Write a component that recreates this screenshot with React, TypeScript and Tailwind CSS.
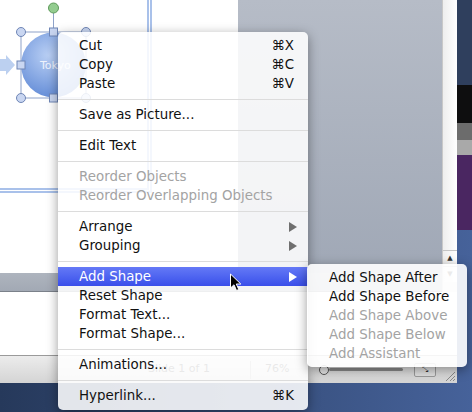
import React from 'react';

type Row =
  | { kind: 'sep' }
  | { kind: 'item'; label: string; keys?: string; off?: boolean; sub?: boolean; hot?: boolean };

const mainMenu: Row[] = [
  { kind: 'item', label: 'Cut', keys: '⌘X' },
  { kind: 'item', label: 'Copy', keys: '⌘C' },
  { kind: 'item', label: 'Paste', keys: '⌘V' },
  { kind: 'sep' },
  { kind: 'item', label: 'Save as Picture...' },
  { kind: 'sep' },
  { kind: 'item', label: 'Edit Text' },
  { kind: 'sep' },
  { kind: 'item', label: 'Reorder Objects', off: true },
  { kind: 'item', label: 'Reorder Overlapping Objects', off: true },
  { kind: 'sep' },
  { kind: 'item', label: 'Arrange', sub: true },
  { kind: 'item', label: 'Grouping', sub: true },
  { kind: 'sep' },
  { kind: 'item', label: 'Add Shape', sub: true, hot: true },
  { kind: 'item', label: 'Reset Shape' },
  { kind: 'item', label: 'Format Text...' },
  { kind: 'item', label: 'Format Shape...' },
  { kind: 'sep' },
  { kind: 'item', label: 'Animations...' },
  { kind: 'sep' },
  { kind: 'item', label: 'Hyperlink...', keys: '⌘K' },
];

const subMenu: Row[] = [
  { kind: 'item', label: 'Add Shape After' },
  { kind: 'item', label: 'Add Shape Before' },
  { kind: 'item', label: 'Add Shape Above', off: true },
  { kind: 'item', label: 'Add Shape Below', off: true },
  { kind: 'item', label: 'Add Assistant', off: true },
];

function Arrow({ white }: { white?: boolean }) {
  return (
    <svg width="8" height="10" viewBox="0 0 8 10" className="-mr-[3px] -mt-[2px]">
      <polygon points="0,0 8,5 0,10" fill={white ? '#ffffff' : '#6f6f6f'} />
    </svg>
  );
}

function MenuRows({ rows, indent }: { rows: Row[]; indent: string }) {
  return (
    <>
      {rows.map((r, i) =>
        r.kind === 'sep' ? (
          <div key={i} className="h-[12px] flex items-center">
            <div className="h-px w-full bg-[#dcdcdc]" />
          </div>
        ) : (
          <div
            key={i}
            className={
              'h-[19px] pt-[2px] flex items-center justify-between pr-[14px] ' +
              indent +
              (r.hot
                ? ' bg-gradient-to-b from-[#6579f6] to-[#3a4eea] text-white'
                : r.off
                ? ' text-[#a3a3a3]'
                : ' text-[#111111]')
            }
          >
            <span>{r.label}</span>
            {r.keys && <span>{r.keys}</span>}
            {r.sub && <Arrow white={r.hot} />}
          </div>
        )
      )}
    </>
  );
}

function Shape() {
  return (
    <svg width="120" height="110" viewBox="0 0 120 110" className="absolute left-0 top-0">
      <defs>
        <radialGradient id="ball" cx="42%" cy="35%" r="70%">
          <stop offset="0%" stopColor="#b9cff4" />
          <stop offset="100%" stopColor="#5f89d6" />
        </radialGradient>
      </defs>
      <polygon points="0,59 6,59 6,55 15,65 6,75 6,71 0,71" fill="#bcd0f0" />
      <circle cx="53.5" cy="65" r="32.5" fill="url(#ball)" />
      <text x="40" y="69" fill="#eef3fc" fontSize="11" fontFamily="DejaVu Sans, sans-serif">
        Tokyo
      </text>
      <rect x="21" y="32" width="65" height="66" fill="none" stroke="#8ea2c9" strokeWidth="1" />
      <line x1="53.5" y1="13" x2="53.5" y2="32" stroke="#8ea2c9" />
      <circle cx="53.5" cy="8" r="5" fill="#93cc8f" stroke="#5e9a5a" />
      {[
        [21, 32],
        [86, 32],
        [21, 98],
        [86, 98],
      ].map(([x, y], i) => (
        <circle key={i} cx={x} cy={y} r="4.5" fill="#c9d6f1" stroke="#6f86b6" />
      ))}
      {[
        [53.5, 32],
        [21, 65],
        [86, 65],
        [53.5, 98],
      ].map(([x, y], i) => (
        <rect key={i} x={x - 4} y={y - 4} width="8" height="8" fill="#c9d6f1" stroke="#6f86b6" />
      ))}
    </svg>
  );
}

export default function App() {
  return (
    <div className="relative w-[472px] h-[412px] overflow-hidden bg-gradient-to-r from-[#26395b] to-[#46629a] font-['DejaVu_Sans',sans-serif]">
      {/* window behind the menu */}
      <div className="flex h-[383px]">
        <div className="w-[457px] flex flex-col">
          <div className="flex h-[292px]">
            <div className="w-[442px] flex flex-col">
              <div className="flex h-[273px]">
                <div className="w-[238px] bg-white relative">
                  <div className="w-[152px] h-[193px] border-r-[5px] border-b-[5px] border-double border-[#a9c1ea]" />
                  <Shape />
                </div>
                <div className="flex-1 bg-gradient-to-b from-[#b6bcc7] to-[#a0a8b6]" />
              </div>
              <div className="h-[19px] bg-gradient-to-b from-[#aeb4be] to-[#a2a9b4] border-b border-[#7b818a]" />
            </div>
            <div className="w-[15px] flex flex-col bg-gradient-to-r from-[#eeeeee] to-white border-l border-[#c8c8c8]">
              <div className="flex-1" />
              <div className="h-[16px] flex items-center justify-center border-t border-[#c4c4c4] text-[7px] text-[#333]">▲</div>
              <div className="h-[16px] flex items-center justify-center border-t border-[#c4c4c4] text-[7px] text-[#333]">▼</div>
              <div className="h-[10px] bg-[#e6e6e6]" />
            </div>
          </div>
          <div className="h-[63px] bg-white" />
          <div className="h-[28px] flex items-center bg-gradient-to-b from-[#ececec] to-[#d4d4d4] border-t border-[#9a9a9a] text-[11px] text-[#555]">
            <span className="ml-[148px] w-[62px]">Slide 1 of 1</span>
            <div className="ml-[40px] w-px h-[18px] bg-[#b4b4b4]" />
            <span className="ml-[14px]">76%</span>
            <div className="ml-[30px] flex items-center">
              <div className="w-[10px] h-[10px] rounded-full border border-[#555] bg-[#e8e8e8]" />
              <div className="w-[74px] h-[3px] bg-[#8a8a8a] rounded-full" />
            </div>
            <div className="ml-[11px] w-[22px] h-[14px] border border-[#9c9c9c] rounded-[2px] bg-[#e2e2e2] flex items-center justify-center text-[8px] text-[#333]">
              ⤡
            </div>
            <svg width="12" height="12" viewBox="0 0 12 12" className="ml-[8px] mt-[12px]">
              <line x1="11" y1="2" x2="2" y2="11" stroke="#8a8a8a" />
              <line x1="11" y1="6" x2="6" y2="11" stroke="#8a8a8a" />
              <line x1="11" y1="9" x2="9" y2="11" stroke="#8a8a8a" />
            </svg>
          </div>
        </div>
        <div className="w-[15px] flex flex-col">
          <div className="h-[85px] bg-[#2f3f5d]" />
          <div className="h-[38px] bg-[#0e0e0f]" />
          <div className="h-[17px] bg-[#6c6c6c]" />
          <div className="h-[15px] bg-[#a9a9a9]" />
          <div className="h-[75px] bg-[#4a2661]" />
          <div className="flex-1" />
        </div>
      </div>

      {/* context menu */}
      <div className="absolute left-[58px] top-[32px] w-[250px] pt-[4px] pb-[5px] rounded-[5px] bg-white/[0.87] shadow-[0_3px_12px_rgba(0,0,0,0.4)] text-[13.4px]">
        <MenuRows rows={mainMenu} indent="pl-[21px]" />
      </div>

      {/* submenu */}
      <div className="absolute left-[307px] top-[264px] w-[160px] pt-[4px] pb-[4px] rounded-[5px] bg-white/[0.9] shadow-[0_3px_12px_rgba(0,0,0,0.4)] text-[13.4px]">
        <MenuRows rows={subMenu} indent="pl-[22px]" />
      </div>

      {/* mouse pointer */}
      <svg width="13" height="19" viewBox="0 0 13 19" className="absolute left-[229px] top-[273px]">
        <path d="M1.5 1 L1.5 15 L5 11.8 L7.5 17.5 L9.8 16.5 L7.3 11 L11.8 11 Z" fill="#000" stroke="#fff" strokeWidth="1" />
      </svg>
    </div>
  );
}
